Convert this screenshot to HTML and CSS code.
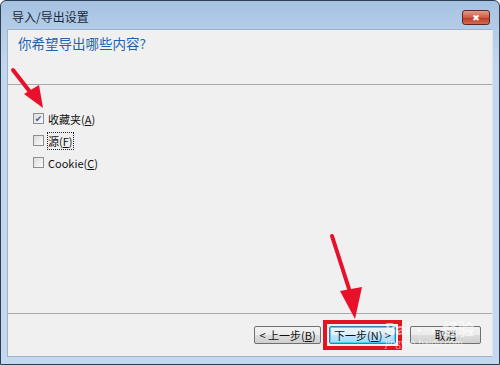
FILE: index.html
```html
<!DOCTYPE html>
<html>
  <head>
    <meta charset="utf-8">
    <title>导入/导出设置</title>
    <link rel="stylesheet" href="styles.css">
  </head>
  <body>
    <div class="window">
      <div class="titlebar">
        <span class="title">导入/导出设置</span>
        <span class="close">&#x2716;</span>
      </div>
      <div class="client">
        <div class="header">你希望导出哪些内容?</div>
        <div class="options">
          <label class="opt"><span class="box checked">&#x2714;</span>收藏夹(<u>A</u>)</label>
          <label class="opt"><span class="box"></span><span class="focus">源(<u>F</u>)</span></label>
          <label class="opt"><span class="box"></span>Cookie(<u>C</u>)</label>
        </div>
        <div class="footer">
          <span class="btn">&lt; 上一步(<u>B</u>)</span>
          <span class="mark"><span class="btn default">下一步(<u>N</u>) &gt;</span></span>
          <span class="btn cancel">取消</span>
        </div>
      </div>

      <!-- 注釈の赤い矢印 -->
      <svg class="arrow arrow-top" width="40" height="45" viewBox="0 0 40 45">
        <line x1="3" y1="3" x2="24" y2="30" stroke="#e8102a" stroke-width="4" stroke-linecap="round"/>
        <polygon points="14,27 33,41 29,18" fill="#e8102a"/>
      </svg>
      <svg class="arrow arrow-bottom" width="40" height="90" viewBox="0 0 40 90">
        <line x1="6" y1="3" x2="25" y2="62" stroke="#e8102a" stroke-width="4" stroke-linecap="round"/>
        <polygon points="14,58 29,86 36,54" fill="#e8102a"/>
      </svg>
      <div class="watermark">Bai<span class="paw">&#x2022;&#x2022;</span>经验<div class="wm-url">jingyan.baidu.com</div></div>
    </div>
  </body>
</html>
```

FILE: styles.css
```css
body {
  margin: 0;
  font-family: "Noto Sans CJK SC", "DejaVu Sans", sans-serif;
}
.window {
  position: relative;
  width: 500px;
  height: 365px;
  box-sizing: border-box;
  border: 1px solid #2e3f52;
  border-radius: 6px 6px 0 0;
  background: linear-gradient(#a6c2e2, #c2d7ee 60px, #c4d9f0);
  padding: 0 6px 7px 6px;
  display: flex;
  flex-direction: column;
  overflow: hidden;
}
.titlebar {
  height: 28px;
  display: flex;
  align-items: center;
  justify-content: space-between;
  padding: 0 3px 0 5px;
}
.title {
  font-size: 12px;
  color: #1b2a3c;
  margin-top: 3px;
}
.close {
  width: 28px;
  height: 15px;
  margin-top: 5px;
  box-sizing: border-box;
  border: 1px solid #5c2a26;
  border-radius: 3px;
  background: linear-gradient(#e49b88, #cf5a42 50%, #b83a22 51%, #d66a4e);
  color: #fff;
  font-size: 9px;
  line-height: 13px;
  text-align: center;
}
.client {
  flex: 1;
  background: #f0f0f0;
  border: 1px solid #9fb3c8;
  border-right-color: #dbe6f2;
  display: flex;
  flex-direction: column;
}
.header {
  height: 55px;
  box-sizing: border-box;
  padding: 3px 0 0 10px;
  font-size: 13.5px;
  color: #1e63b2;
  border-bottom: 1px solid #a9a9a9;
}
.options {
  flex: 1;
  padding: 27px 0 0 25px;
  display: flex;
  flex-direction: column;
  gap: 9px;
}
.opt {
  display: flex;
  align-items: center;
  height: 13px;
  font-size: 11px;
  color: #111;
}
.box {
  width: 11px;
  height: 11px;
  box-sizing: border-box;
  border: 1px solid #8e8f8f;
  background: linear-gradient(135deg, #dcdcdc, #fbfbfb);
  margin-right: 4px;
  font-size: 9px;
  line-height: 10px;
  text-align: center;
  color: #3a5caa;
}
.focus {
  outline: 1px dotted #222;
}
.footer {
  height: 42px;
  border-top: 1px solid #a9a9a9;
  display: flex;
  align-items: center;
  padding: 0 0 0 246px;
  gap: 5px;
}
.btn {
  flex-shrink: 0;
  width: 67px;
  height: 18px;
  box-sizing: border-box;
  border: 1px solid #707070;
  border-radius: 2px;
  background: linear-gradient(#f2f2f2, #ebebeb 50%, #dddddd 51%, #cfcfcf);
  font-size: 11px;
  line-height: 16px;
  text-align: center;
  color: #111;
}
.mark {
  flex-shrink: 0;
  border: 4px solid #e2141f;
  padding: 2px;
  margin: 0 3px 0 -3px;
}
.btn.default {
  display: block;
  border-color: #3c7fb1;
  background: linear-gradient(#eaf6fd, #d9f0fc 50%, #bee6fd 51%, #a7d9f5);
  box-shadow: inset 0 0 0 1px #48d0f7;
}
.btn.cancel {
  width: 71px;
}
.arrow {
  position: absolute;
}
.arrow-top {
  left: 9px;
  top: 66px;
}
.arrow-bottom {
  left: 325px;
  top: 232px;
}
.watermark {
  position: absolute;
  left: 384px;
  top: 318px;
  font-size: 16px;
  font-weight: bold;
  color: rgba(255, 255, 255, 0.6);
  line-height: 18px;
}
.paw {
  font-size: 14px;
  margin: 0 2px;
}
.wm-url {
  font-size: 9px;
  font-weight: normal;
  line-height: 10px;
}
```
